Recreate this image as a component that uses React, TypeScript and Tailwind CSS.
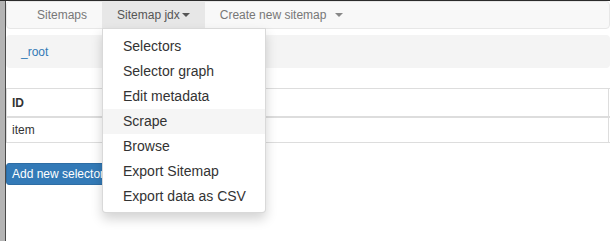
import React from "react";

const menuItems = [
  "Selectors",
  "Selector graph",
  "Edit metadata",
  "Scrape",
  "Browse",
  "Export Sitemap",
  "Export data as CSV",
];

const Caret = ({ className }: { className: string }) => (
  <span
    className={`inline-block w-0 h-0 ml-[2px] align-middle border-t-[4px] border-x-[4px] border-x-transparent ${className}`}
  />
);

const App: React.FC = () => {
  return (
    <div className="flex w-[610px] h-[241px] overflow-hidden bg-white border-t border-[#2b2b2b] font-['Liberation_Sans',Arial,sans-serif]">
      <div className="w-[6px] shrink-0 bg-[#b4b4b4] border-r border-[#4a4a4a]" />

      <div className="relative flex-1 min-w-0">
        {/* navbar */}
        <div className="h-[28px] bg-[#f8f8f8] border border-[#e7e7e7] rounded-[4px] flex pl-[15px] text-[12px]">
          <div className="px-[15px] flex items-center text-[#777]">Sitemaps</div>
          <div className="px-[15px] flex items-center text-[#555] bg-[#e7e7e7]">
            Sitemap jdx
            <Caret className="border-t-[#555]" />
          </div>
          <div className="px-[15px] flex items-center text-[#777]">
            Create new sitemap&nbsp;
            <Caret className="border-t-[#888] ml-[5px]" />
          </div>
        </div>

        {/* breadcrumb */}
        <div className="mt-[6px] h-[33px] bg-[#f4f4f4] rounded-[4px] flex items-center px-[15px] text-[12px] text-[#337ab7]">
          _root
        </div>

        {/* selector table */}
        <div className="mt-[20px] w-[620px] text-[12px] text-[#333]">
          <div className="flex border-t border-l border-[#ddd] h-[30px] border-b-2">
            <div className="w-[602px] border-r border-[#ddd] font-bold pl-[5px] flex items-center">
              ID
            </div>
          </div>
          <div className="flex border-l border-b border-[#ddd] h-[25px]">
            <div className="w-[602px] border-r border-[#ddd] pl-[5px] flex items-center">
              item
            </div>
          </div>
        </div>

        <button className="mt-[20px] h-[22px] px-[5px] rounded-[3px] bg-[#337ab7] border border-[#2e6da4] text-white text-[12px] leading-[18px] whitespace-nowrap">
          Add new selector
        </button>

        {/* dropdown menu */}
        <div className="absolute left-[96px] top-[27px] w-[164px] bg-white border border-[rgba(0,0,0,0.15)] rounded-b-[4px] shadow-[0_6px_12px_rgba(0,0,0,0.175)] pt-[5px] pb-[3px]">
          {menuItems.map((item) => (
            <div
              key={item}
              className={`h-[25px] leading-[25px] px-[20px] text-[14px] text-[#333] whitespace-nowrap ${
                item === "Scrape" ? "bg-[#f5f5f5]" : ""
              }`}
            >
              {item}
            </div>
          ))}
        </div>
      </div>
    </div>
  );
};

export default App;
